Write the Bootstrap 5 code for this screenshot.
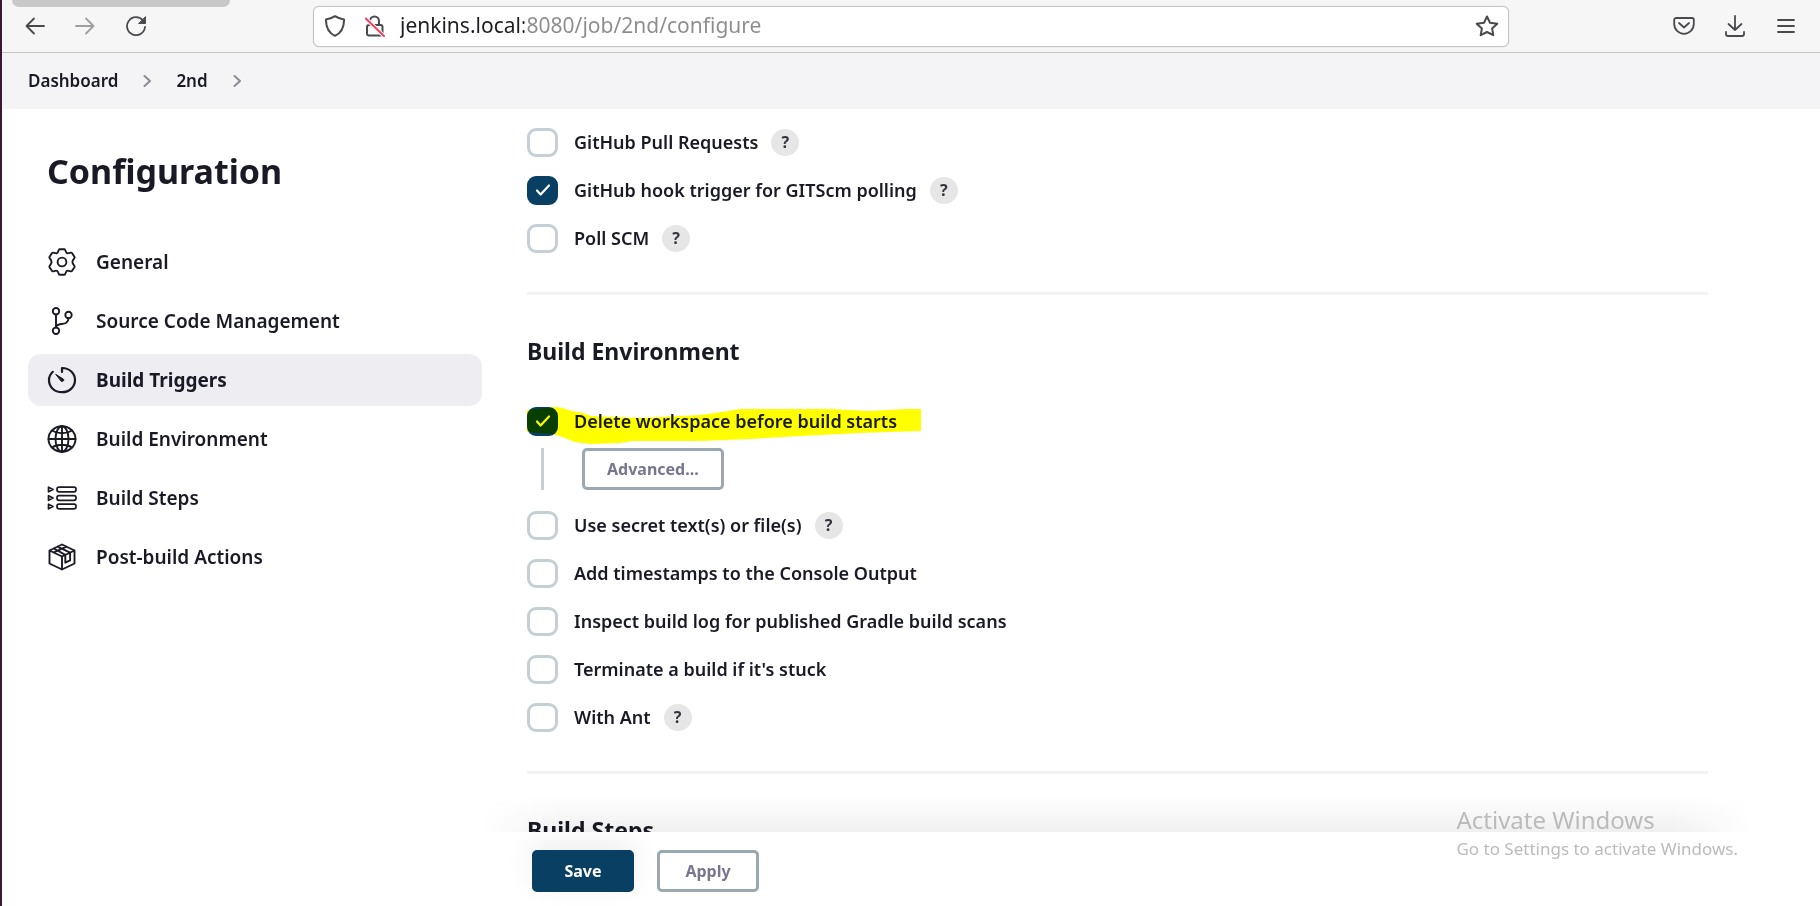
<!DOCTYPE html>
<html lang="en">
<head>
<meta charset="utf-8">
<meta name="viewport" content="width=device-width, initial-scale=1">
<title>2nd Config [Jenkins]</title>
<link href="https://cdn.jsdelivr.net/npm/bootstrap@5.3.0/dist/css/bootstrap.min.css" rel="stylesheet">
<style>
:root{--ink:#1a1a26;--navy:#083f62;--edge:#9aa8b1;--soft:#c5d0d5}
body{font-family:"Noto Sans","Open Sans",sans-serif;font-size:18px;font-weight:600;color:var(--ink);border-left:2px solid #3a1733;background:#fff}
svg{fill:none;stroke:currentColor;stroke-linecap:round;stroke-linejoin:round;flex:none}
.toolbar{height:53px;background:#f6f6f6;border-bottom:1px solid #c4c4c4;color:#4a4a4e;padding:0 23px 0 19px}
.toolbar .btn{border:0;line-height:0;color:inherit}
.tab-edge{left:10px;top:0;width:218px;height:7px;background:#c8c8c8;border-radius:0 0 8px 8px}
.nav-keys{width:292px;gap:22px}
.nav-keys .btn:disabled{opacity:.5}
.addr{height:41px;max-width:1196px;background:#fff;border:1px solid #c6c6c6;border-radius:6px;padding:0 9px 0 7px;box-shadow:0 0 1px #bbb}
.addr .lock{margin:0 15px 0 20px}
.addr input{border:0;outline:0;padding:0;min-width:0;font-size:21px;font-weight:400;color:#888;-webkit-text-fill-color:transparent;background:linear-gradient(90deg,#1d1d22 124px,#8c8c8c 124px);-webkit-background-clip:text;background-clip:text}
.tools{gap:29px}
.crumbs{height:56px;background:#f4f4f7;padding:0 26px}
.crumbs a{font-size:17px}
.crumbs svg{margin:0 25px}
.crumbs a,.side-link{color:var(--ink);text-decoration:none}
.crumbs svg{color:#8b8b96}
.side{width:480px;padding:38px 0 0 26px}
.side h1{font-size:34px;line-height:48px;font-weight:700;margin:0 0 41px;padding-left:19px}
.side-link{height:52px;border-radius:13px;padding:0 19px;gap:19px;font-size:19px}
.side-link.active{background:#eeedf2;font-weight:700}
.side nav{gap:7px}
.work{margin-left:45px;margin-right:112px}
.scroller{padding-top:19px;min-height:0}
.opts{gap:20px}
.opt{height:28px;gap:16px}
.opt .form-check-input{width:31px;height:29px;margin:0;float:none;border:3px solid var(--soft);border-radius:9px;flex:none}
.opt .form-check-input:checked{background:var(--navy) url("data:image/svg+xml,%3Csvg xmlns='http://www.w3.org/2000/svg' viewBox='0 0 16 14'%3E%3Cpath fill='none' stroke='%23fff' stroke-width='2.2' stroke-linecap='round' stroke-linejoin='round' d='M2 7.5l3.6 4L14 2.5'/%3E%3C/svg%3E") center/16px 14px no-repeat;border-color:var(--navy)}
.help{width:28px;height:27px;border:0;border-radius:50%;background:#e6e6e6;color:#33333d;font-size:16px;font-weight:700;line-height:26px;padding:0;margin-left:-3px}
.rule{height:3px;background:#f2f2f7;margin:40px 0 41px}
h2.sect{font-size:23px;font-weight:700;line-height:30px;margin:0 0 41px}
.marker{left:-2px;top:0;mix-blend-mode:multiply;pointer-events:none}
.nested{margin:13px 0 21px 14px;border-left:3px solid var(--soft);padding-left:38px;height:42px}
.act{height:42px;border:3px solid var(--edge);border-radius:5px;color:#76768f;background:#fff;font-size:16px;font-weight:700;line-height:20px;padding:0 22px}
.act-main{background:var(--navy);border-color:var(--navy);color:#fff}
.foot{height:74px;padding:18px 5px 0;gap:23px}
.foot .act{width:102px;padding:0}
.foot .act-main{box-shadow:0 -8px 28px rgba(0,0,0,.07)}
.foot::before{content:"";position:absolute;left:-44px;right:-44px;top:-36px;height:36px;background:linear-gradient(transparent,rgba(0,0,0,.06));-webkit-mask:linear-gradient(90deg,transparent,#000 80px calc(100% - 80px),transparent);mask:linear-gradient(90deg,transparent,#000 80px calc(100% - 80px),transparent);pointer-events:none}
.wm{right:82px;bottom:45px;color:#bbb;font-family:"Noto Sans","Open Sans",sans-serif;font-weight:400;font-size:17px;line-height:24px;z-index:5;pointer-events:none}
.wm strong{font-size:24px;line-height:34px;font-weight:400;display:block}
</style>
</head>
<body class="vh-100 overflow-hidden d-flex flex-column position-relative">
<header class="toolbar d-flex align-items-center position-relative flex-shrink-0">
  <div class="tab-edge position-absolute"></div>
  <div class="nav-keys d-flex flex-shrink-0">
    <button class="btn p-1" aria-label="Back"><svg width="20" height="20" viewBox="0 0 20 20" stroke-width="1.800"><path d="M19 10H1.500M9 2.500L1.500 10 9 17.500"/></svg></button>
    <button class="btn p-1" aria-label="Forward" disabled><svg width="20" height="20" viewBox="0 0 20 20" stroke-width="1.800"><path d="M1 10h17.500M11 2.500l7.500 7.500-7.500 7.500"/></svg></button>
    <button class="btn p-1" aria-label="Reload"><svg width="22" height="20" viewBox="0 0 22 20" stroke-width="1.800"><path d="M18 4.500A9 9 0 1 0 20 11"/><path d="M20.500 1v6.500H14z" fill="currentColor" stroke-width="1"/></svg></button>
  </div>
  <div class="addr d-flex align-items-center flex-grow-1">
    <svg class="ms-1" width="20" height="22" viewBox="0 0 20 22" stroke-width="2"><path d="M10 1.200c3 2 5.700 2.900 9 3.200C19.200 12 16 18 10 20.800 4 18 .8 12 1 4.400c3.300-.3 6-1.200 9-3.200z"/></svg>
    <svg class="lock" width="20" height="22" viewBox="0 0 20 22" stroke-width="2"><path d="M5 10V6a4.500 4.500 0 0 1 9 0v4M4 10h11.500a2 2 0 0 1 2 2v6.500a2 2 0 0 1-2 2H4a2 2 0 0 1-2-2V12a2 2 0 0 1 2-2z"/><path d="M.8 3.500L19 21" stroke="#fff" stroke-width="4"/><path d="M.8 3.500L19 21" stroke="#f0405f"/></svg>
    <input class="flex-grow-1" type="text" aria-label="Address" value="jenkins.local:8080/job/2nd/configure">
    <button class="btn p-0" aria-label="Bookmark"><svg width="24" height="22" viewBox="0 0 24 22" stroke-width="2"><path d="M12 1.500l3 6.200 7.300 1-5.200 4.700 1.200 6.800L12 17l-6.300 3.200 1.200-6.800L1.700 8.700l7.300-1z"/></svg></button>
  </div>
  <div class="tools d-flex ms-auto align-items-center">
    <button class="btn p-0" aria-label="Save to Pocket"><svg width="22" height="20" viewBox="0 0 22 20" stroke-width="1.800"><path d="M3 2h16a1.800 1.800 0 0 1 1.800 1.800V8a9.800 9.800 0 0 1-19.600 0V3.800A1.800 1.800 0 0 1 3 2z"/><path d="M6 7l5 4.500L16 7"/></svg></button>
    <button class="btn p-0" aria-label="Downloads"><svg width="22" height="22" viewBox="0 0 22 22" stroke-width="1.800"><path d="M11 1v14M4.500 9l6.500 6 6.500-6M2 17v2a2 2 0 0 0 2 2h14a2 2 0 0 0 2-2v-2"/></svg></button>
    <button class="btn p-0" aria-label="Menu"><svg width="22" height="20" viewBox="0 0 22 20" stroke-width="1.800"><path d="M3 4h16M3 10h16M3 16h16"/></svg></button>
  </div>
</header>

<nav class="crumbs d-flex align-items-center flex-shrink-0" aria-label="breadcrumb">
  <a href="#">Dashboard</a>
  <svg width="8" height="12" viewBox="0 0 8 12" stroke-width="2"><path d="M1.500 1L7 6l-5.500 5"/></svg>
  <a href="#">2nd</a>
  <svg width="8" height="12" viewBox="0 0 8 12" stroke-width="2"><path d="M1.500 1L7 6l-5.500 5"/></svg>
</nav>

<div class="d-flex flex-grow-1 overflow-hidden">
  <aside class="side flex-shrink-0">
    <h1>Configuration</h1>
    <nav class="d-flex flex-column">
      <a class="side-link d-flex align-items-center" href="#general">
        <svg width="30" height="28" viewBox="0 0 30 28" stroke-width="1.900"><path d="M12.500 1.200h5c1 0 1 3.300 2.500 4s4-1.200 4.800-.4l2.800 4.300c.5 1-2.200 2.600-2.200 4.900s2.700 3.900 2.200 4.900l-2.800 4.300c-.8.800-3.300-1.100-4.800-.4s-1.500 4-2.500 4h-5c-1 0-1-3.300-2.500-4s-4 1.200-4.800.4l-2.800-4.300c-.5-1 2.200-2.600 2.200-4.900S1.900 10.100 2.400 9.100l2.800-4.300c.8-.8 3.300 1.100 4.800.4s1.500-4 2.500-4z"/><circle cx="15" cy="14" r="4.400"/></svg>General</a>
      <a class="side-link d-flex align-items-center" href="#scm">
        <svg width="30" height="28" viewBox="0 0 30 28" stroke-width="1.900"><circle cx="9" cy="4.200" r="3.200"/><circle cx="9" cy="23.800" r="3.200"/><circle cx="21.500" cy="8" r="3.200"/><path d="M9 7.500v13M21.500 11.300c0 6-6 5.200-9.500 6.200-2 .6-3 1.500-3 3"/></svg>Source Code Management</a>
      <a class="side-link active d-flex align-items-center" href="#triggers">
        <svg width="30" height="28" viewBox="0 0 30 28" stroke-width="2.200"><path d="M15 6V2c7.500 0 13 5.300 13 12S22.500 26.200 15 26.200 2 21 2 14c0-3.300 1.500-6 3.800-8.200"/><path d="M9 8.500l7.500 4.700c1 .8-.6 3-2 2.200z" fill="currentColor" stroke-width="1"/></svg>Build Triggers</a>
      <a class="side-link d-flex align-items-center" href="#environment">
        <svg width="30" height="28" viewBox="0 0 30 28" stroke-width="1.900"><ellipse cx="15" cy="14" rx="13.500" ry="12.800"/><ellipse cx="15" cy="14" rx="6.500" ry="12.800"/><path d="M15 1v26M1.500 14h27M5 5.500c5.500 3.600 14.500 3.600 20 0M5 22.500c5.500-3.600 14.500-3.600 20 0"/></svg>Build Environment</a>
      <a class="side-link d-flex align-items-center" href="#steps">
        <svg width="30" height="28" viewBox="0 0 30 28" stroke-width="1.700"><rect x="10" y="3.200" width="19" height="4.600" rx="2"/><rect x="10" y="11.700" width="19" height="4.600" rx="2"/><rect x="10" y="20.200" width="19" height="4.600" rx="2"/><path d="M1.500 3.200L6 5.500 1.500 7.800zM1.500 11.700L6 14l-4.500 2.300zM1.500 20.200L6 22.500l-4.500 2.300z"/></svg>Build Steps</a>
      <a class="side-link d-flex align-items-center" href="#post">
        <svg width="30" height="28" viewBox="0 0 30 28" stroke-width="1.900"><path d="M15 1.500l12.500 6v13L15 26.500l-12.500-6v-13zM2.500 7.500L15 13.500l12.500-6M15 13.500v13M10.600 3.600l12.500 6v7.800l-4.800 2.300v-7.800L6.800 5.500M6.800 9.400L19.400 3.600"/></svg>Post-build Actions</a>
    </nav>
  </aside>

  <main class="work flex-grow-1 d-flex flex-column">
    <div class="scroller flex-grow-1 overflow-hidden">
      <div class="opts d-flex flex-column">
        <div class="opt d-flex align-items-center"><input class="form-check-input" type="checkbox" id="c1"><label for="c1">GitHub Pull Requests</label><button class="help" aria-label="Help for GitHub Pull Requests">?</button></div>
        <div class="opt d-flex align-items-center"><input class="form-check-input" type="checkbox" id="c2" checked><label for="c2">GitHub hook trigger for GITScm polling</label><button class="help" aria-label="Help for GitHub hook trigger">?</button></div>
        <div class="opt d-flex align-items-center"><input class="form-check-input" type="checkbox" id="c3"><label for="c3">Poll SCM</label><button class="help" aria-label="Help for Poll SCM">?</button></div>
      </div>
      <div class="rule"></div>
      <h2 class="sect">Build Environment</h2>
      <div class="opt d-flex align-items-center position-relative"><input class="form-check-input" type="checkbox" id="c4" checked><label for="c4">Delete workspace before build starts</label>
        <svg class="marker position-absolute" width="396" height="40" viewBox="525 407 396 40"><path fill="#ff0" stroke="none" d="M526 410L556 407 562 408 572 411 583 413 591 416 640 418 700 415 722 412 740 409H830L870 411 905 409H921V431L860 433 800 436 750 439 700 441 633 441 620 443 590 444 575 442 562 437 553 434 526 432z"/></svg>
      </div>
      <div class="nested"><button class="act">Advanced...</button></div>
      <div class="opts d-flex flex-column">
        <div class="opt d-flex align-items-center"><input class="form-check-input" type="checkbox" id="c5"><label for="c5">Use secret text(s) or file(s)</label><button class="help" aria-label="Help for secret text">?</button></div>
        <div class="opt d-flex align-items-center"><input class="form-check-input" type="checkbox" id="c6"><label for="c6">Add timestamps to the Console Output</label></div>
        <div class="opt d-flex align-items-center"><input class="form-check-input" type="checkbox" id="c7"><label for="c7">Inspect build log for published Gradle build scans</label></div>
        <div class="opt d-flex align-items-center"><input class="form-check-input" type="checkbox" id="c8"><label for="c8">Terminate a build if it's stuck</label></div>
        <div class="opt d-flex align-items-center"><input class="form-check-input" type="checkbox" id="c9"><label for="c9">With Ant</label><button class="help" aria-label="Help for With Ant">?</button></div>
      </div>
      <div class="rule"></div>
      <h2 class="sect">Build Steps</h2>
    </div>
    <div class="foot d-flex align-items-start position-relative flex-shrink-0">
      <button class="act act-main">Save</button>
      <button class="act">Apply</button>
    </div>
  </main>
</div>
<div class="wm position-absolute"><strong>Activate Windows</strong>Go to Settings to activate Windows.</div>
<script src="https://cdn.jsdelivr.net/npm/bootstrap@5.3.0/dist/js/bootstrap.bundle.min.js"></script>
</body>
</html>
